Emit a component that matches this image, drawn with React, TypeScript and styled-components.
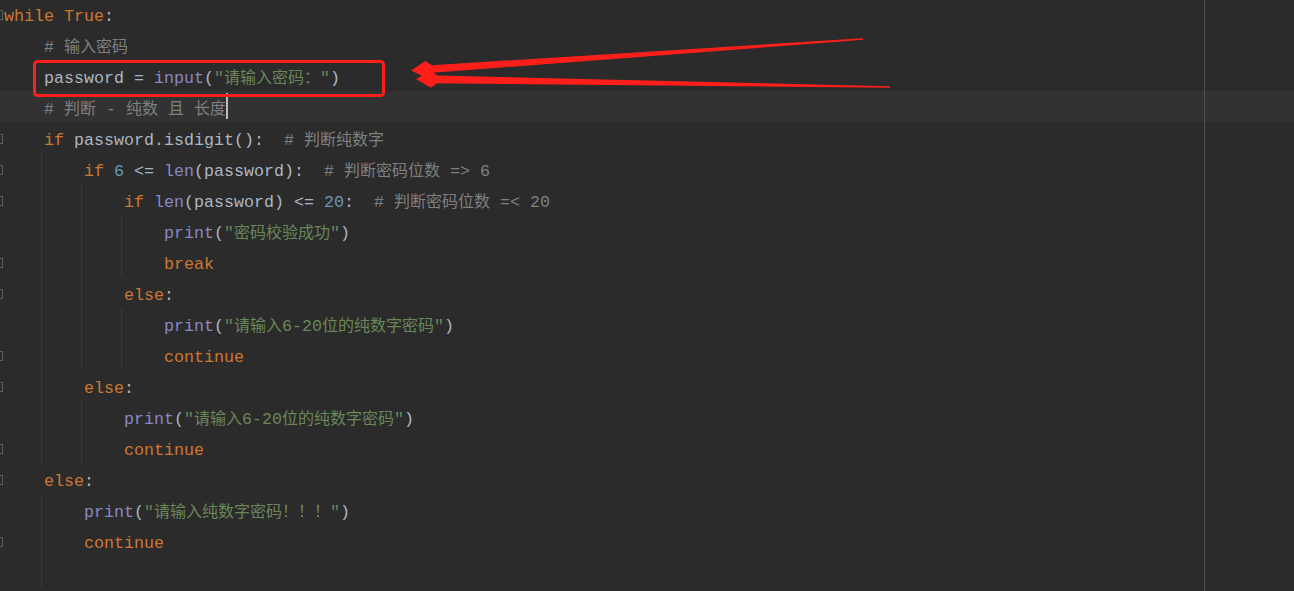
import React from 'react';
import styled, { createGlobalStyle } from 'styled-components';

type Kind = 'kw' | 'id' | 'fn' | 'str' | 'cm' | 'num';

type LineData = {
  indent: number;
  guides: number;
  fold?: boolean;
  current?: boolean;
  tokens: [Kind, string][];
};

const palette: Record<Kind, string> = {
  kw: '#cc7832',
  id: '#a9b7c6',
  fn: '#8888c6',
  str: '#6a8759',
  cm: '#808080',
  num: '#6897bb',
};

const MARGIN_X = 1204;
const marginRule = `linear-gradient(#4e4e4e, #4e4e4e) ${MARGIN_X}px 0 / 1px 100% no-repeat`;

const GlobalStyle = createGlobalStyle`
  html, body {
    margin: 0;
    padding: 0;
    background: #2b2b2b;
    overflow: hidden;
  }
`;

const Editor = styled.div`
  position: relative;
  width: 100%;
  height: 100vh;
  overflow: hidden;
  background: ${marginRule}, #2b2b2b;
  font-family: 'Liberation Mono', 'Noto Sans CJK SC', monospace;
  font-size: 16.67px;
  color: #a9b7c6;
`;

const Lines = styled.div`
  display: flex;
  flex-direction: column;
  margin-top: -2px;
`;

const Row = styled.div<{ $current?: boolean }>`
  display: flex;
  height: 31px;
  background: ${({ $current }) => ($current ? `${marginRule}, #323232` : 'transparent')};
`;

const Gutter = styled.div`
  flex: none;
  width: 4px;
  overflow: hidden;
  display: flex;
  align-items: center;
`;

const FoldMark = styled.span`
  flex: none;
  box-sizing: border-box;
  width: 7px;
  height: 10px;
  margin: 2px 0 0 -4px;
  border: 1px solid #5e5e5e;
`;

const Indent = styled.span<{ $guide: boolean }>`
  flex: none;
  width: 40px;
  background: ${({ $guide }) =>
    $guide ? 'linear-gradient(#3a3a3a, #3a3a3a) 37px 0 / 1px 100% no-repeat' : 'none'};
`;

const Code = styled.span`
  padding-top: 6px;
  line-height: 25px;
  white-space: pre;
`;

const Tok = styled.span<{ $kind: Kind }>`
  color: ${({ $kind }) => palette[$kind]};
`;

const Cjk = styled.span`
  font-size: 16px;
`;

const Caret = styled.span`
  flex: none;
  width: 2px;
  height: 26px;
  margin-top: 2px;
  background: #bbbbbb;
`;

const Annotation = styled.svg`
  position: absolute;
  inset: 0;
  width: 100%;
  height: 100%;
  pointer-events: none;
`;

const RED = '#ff1f1a';

const lines: LineData[] = [
  { indent: 0, guides: 0, fold: true, tokens: [['kw', 'while'], ['id', ' '], ['kw', 'True'], ['id', ':']] },
  { indent: 1, guides: 0, tokens: [['cm', '# 输入密码']] },
  {
    indent: 1,
    guides: 0,
    tokens: [['id', 'password = '], ['fn', 'input'], ['id', '('], ['str', '"请输入密码："'], ['id', ')']],
  },
  { indent: 1, guides: 0, current: true, tokens: [['cm', '# 判断 - 纯数 且 长度']] },
  {
    indent: 1,
    guides: 0,
    fold: true,
    tokens: [['kw', 'if'], ['id', ' password.isdigit():  '], ['cm', '# 判断纯数字']],
  },
  {
    indent: 2,
    guides: 1,
    fold: true,
    tokens: [
      ['kw', 'if '],
      ['num', '6'],
      ['id', ' <= '],
      ['fn', 'len'],
      ['id', '(password):  '],
      ['cm', '# 判断密码位数 => 6'],
    ],
  },
  {
    indent: 3,
    guides: 2,
    fold: true,
    tokens: [
      ['kw', 'if '],
      ['fn', 'len'],
      ['id', '(password) <= '],
      ['num', '20'],
      ['id', ':  '],
      ['cm', '# 判断密码位数 =< 20'],
    ],
  },
  { indent: 4, guides: 3, tokens: [['fn', 'print'], ['id', '('], ['str', '"密码校验成功"'], ['id', ')']] },
  { indent: 4, guides: 3, fold: true, tokens: [['kw', 'break']] },
  { indent: 3, guides: 2, fold: true, tokens: [['kw', 'else'], ['id', ':']] },
  {
    indent: 4,
    guides: 3,
    tokens: [['fn', 'print'], ['id', '('], ['str', '"请输入6-20位的纯数字密码"'], ['id', ')']],
  },
  { indent: 4, guides: 3, fold: true, tokens: [['kw', 'continue']] },
  { indent: 2, guides: 1, fold: true, tokens: [['kw', 'else'], ['id', ':']] },
  {
    indent: 3,
    guides: 2,
    tokens: [['fn', 'print'], ['id', '('], ['str', '"请输入6-20位的纯数字密码"'], ['id', ')']],
  },
  { indent: 3, guides: 2, fold: true, tokens: [['kw', 'continue']] },
  { indent: 1, guides: 0, fold: true, tokens: [['kw', 'else'], ['id', ':']] },
  {
    indent: 2,
    guides: 1,
    tokens: [['fn', 'print'], ['id', '('], ['str', '"请输入纯数字密码！！！"'], ['id', ')']],
  },
  { indent: 2, guides: 1, fold: true, tokens: [['kw', 'continue']] },
  { indent: 1, guides: 1, tokens: [] },
];

// CJK glyphs are 16px wide in the editor, latin ones 10px
const CJK_RE = /([\u3000-\u303f\u4e00-\u9fff\uff00-\uffef]+)/;

const renderText = (text: string) =>
  text.split(CJK_RE).map((part, i) => (i % 2 === 1 ? <Cjk key={i}>{part}</Cjk> : part));

type Pt = [number, number];

// snipaste-like arrow: thin tail widening toward a barbed head
const arrowPoints = (tail: Pt, tip: Pt, barb: number, notch: number) => {
  const dx = tip[0] - tail[0];
  const dy = tip[1] - tail[1];
  const len = Math.hypot(dx, dy);
  const ux = dx / len;
  const uy = dy / len;
  const p = (a: number, s: number) =>
    `${(tip[0] - ux * a - uy * s).toFixed(1)},${(tip[1] - uy * a + ux * s).toFixed(1)}`;
  return [p(0, 0), p(15, barb), p(21, notch), p(len, 0.8), p(len, -0.8), p(21, -notch), p(15, -barb)].join(' ');
};

const App = () => (
  <>
    <GlobalStyle />
    <Editor>
      <Lines>
        {lines.map((line, i) => (
          <Row key={i} $current={line.current}>
            <Gutter>{line.fold && <FoldMark />}</Gutter>
            {Array.from({ length: line.indent }, (_, k) => (
              <Indent key={k} $guide={k < line.guides} />
            ))}
            <Code>
              {line.tokens.map(([kind, text], j) => (
                <Tok key={j} $kind={kind}>
                  {renderText(text)}
                </Tok>
              ))}
            </Code>
            {line.current && <Caret />}
          </Row>
        ))}
      </Lines>
      <Annotation viewBox="0 0 1294 591">
        <rect x={34.5} y={61.5} width={349} height={34} rx={3} fill="none" stroke={RED} strokeWidth={3} />
        <polygon points={arrowPoints([863, 39], [411, 70.5], 8.5, 3.8)} fill={RED} />
        <polygon points={arrowPoints([890, 87], [416, 79], 8.5, 3.8)} fill={RED} />
      </Annotation>
    </Editor>
  </>
);

export default App;
